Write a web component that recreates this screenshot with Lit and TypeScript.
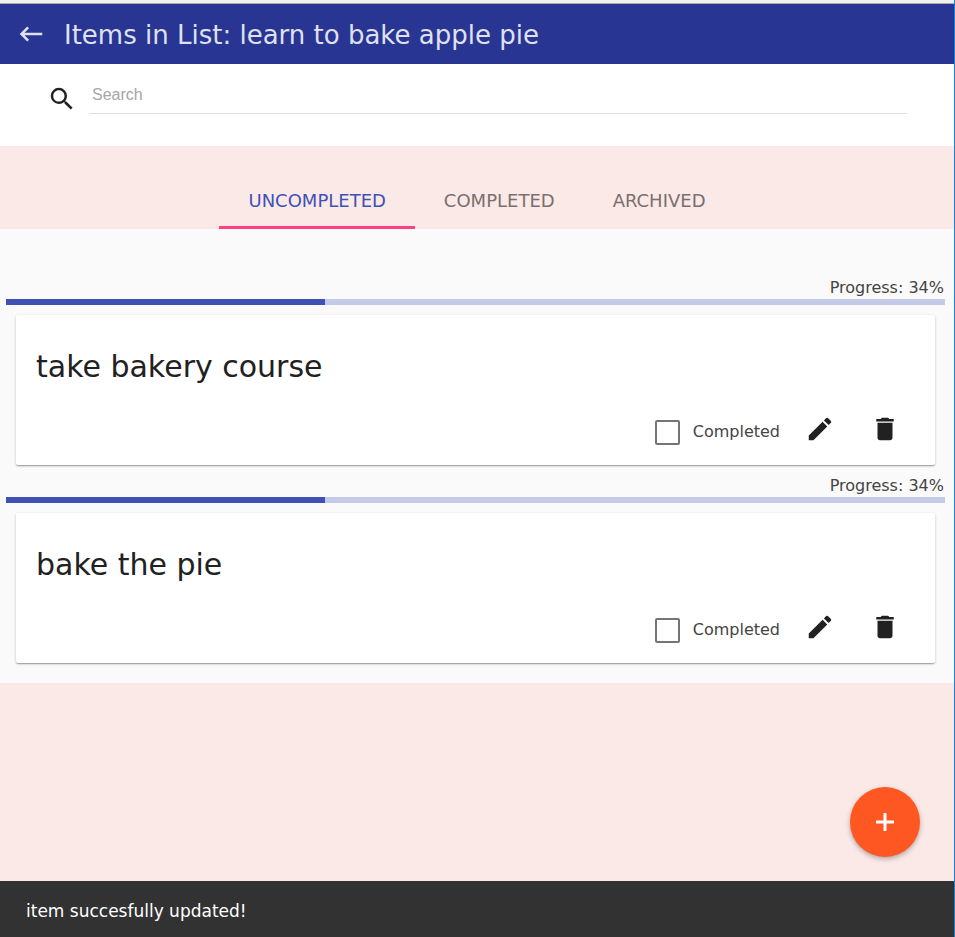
import { LitElement, html, css } from "lit";
import { customElement, property, state } from "lit/decorators.js";
import { classMap } from "lit/directives/class-map.js";

interface Item {
  id: number;
  title: string;
  progress: number;
}

@customElement("list-item")
class ListItem extends LitElement {
  @property({ attribute: false }) item!: Item;

  static styles = css`
    :host {
      display: block;
      padding-bottom: 10px;
    }
    .progress-label {
      display: block;
      height: 22px;
      padding-right: 1px;
      line-height: 22px;
      font-size: 16px;
      text-align: right;
      color: #444;
    }
    .bar {
      display: block;
      width: 100%;
      height: 6px;
      border: 0;
      appearance: none;
      background: #c5cae9;
    }
    .bar::-webkit-progress-bar {
      background: #c5cae9;
    }
    .bar::-webkit-progress-value {
      background: #3f51b5;
    }
    .card {
      display: flex;
      flex-direction: column;
      justify-content: space-between;
      box-sizing: border-box;
      min-height: 150px;
      margin: 10px 10px 0;
      padding: 30px 35px 20px 20px;
      border-radius: 2px;
      background: #fff;
      box-shadow: 0 1px 3px 0 rgba(0, 0, 0, 0.2), 0 1px 1px 0 rgba(0, 0, 0, 0.14),
        0 2px 1px -1px rgba(0, 0, 0, 0.12);
    }
    .title {
      margin: 0;
      font-size: 30px;
      font-weight: 400;
      line-height: 44px;
      color: #212121;
    }
    .actions {
      display: flex;
      align-items: flex-start;
      justify-content: flex-end;
      gap: 25px;
    }
    .check {
      display: flex;
      align-items: center;
      gap: 13px;
      padding-top: 5px;
      font-size: 16px;
      line-height: 26px;
      color: #444;
    }
    .box {
      box-sizing: border-box;
      width: 25px;
      height: 25px;
      margin: 0;
      border: 2px solid #757575;
      border-radius: 2px;
      appearance: none;
      background: #fff;
    }
    .box:checked {
      border-color: #3f51b5;
      background: #3f51b5;
    }
    .icon-button {
      display: flex;
      padding: 0;
      border: 0;
      background: none;
      cursor: pointer;
    }
    .icon-button + .icon-button {
      margin-left: 10px;
    }
    .icon {
      width: 30px;
      height: 30px;
      fill: #212121;
    }
  `;

  render() {
    const { id, title, progress } = this.item;
    return html`
      <label class="progress-label" for="bar-${id}">Progress: ${progress}%</label>
      <progress class="bar" id="bar-${id}" max="100" .value=${progress}></progress>
      <article class="card">
        <h2 class="title">${title}</h2>
        <div class="actions">
          <label class="check"><input class="box" type="checkbox" />Completed</label>
          <button class="icon-button" aria-label="Edit">
            <svg class="icon" viewBox="0 0 24 24">
              <path d="M3 17.25V21h3.75L17.81 9.94l-3.75-3.75L3 17.25zM20.71 7.04a1 1 0 0 0 0-1.41l-2.34-2.34a1 1 0 0 0-1.41 0l-1.83 1.83 3.75 3.75 1.83-1.83z" />
            </svg>
          </button>
          <button class="icon-button" aria-label="Delete">
            <svg class="icon" viewBox="0 0 24 24">
              <path d="M6 19c0 1.1.9 2 2 2h8c1.1 0 2-.9 2-2V7H6v12zM19 4h-3.5l-1-1h-5l-1 1H5v2h14V4z" />
            </svg>
          </button>
        </div>
      </article>
    `;
  }
}

@customElement("app-root")
class AppRoot extends LitElement {
  @state() private tab = "Uncompleted";

  private tabs = ["Uncompleted", "Completed", "Archived"];

  private items: Item[] = [
    { id: 1, title: "take bakery course", progress: 34 },
    { id: 2, title: "bake the pie", progress: 34 },
  ];

  static styles = css`
    :host {
      display: flex;
      flex-direction: column;
      box-sizing: border-box;
      min-height: 100vh;
      border-right: 1px solid #1a82d2;
      background: #fbe9e7;
      font-family: "DejaVu Sans", Verdana, sans-serif;
    }
    .edge {
      height: 3px;
      border-bottom: 1px solid #aaa;
      background: #f0f0f0;
    }
    .toolbar {
      display: flex;
      align-items: center;
      gap: 18px;
      height: 60px;
      padding: 0 16px;
      background: #283593;
    }
    .back {
      display: flex;
      padding: 0;
      border: 0;
      background: none;
      cursor: pointer;
    }
    .back-icon {
      width: 30px;
      height: 30px;
      fill: #dfe1ef;
    }
    .heading {
      margin: 0;
      padding-top: 2px;
      font-size: 26px;
      font-weight: 400;
      line-height: 32px;
      color: #dfe1ef;
    }
    .search {
      display: flex;
      align-items: flex-start;
      gap: 12px;
      box-sizing: border-box;
      height: 82px;
      padding: 12px 47px 0;
      background: #fff;
    }
    .search-icon {
      flex: none;
      width: 30px;
      height: 30px;
      margin-top: 8px;
      fill: #212121;
    }
    .search-input {
      flex: 1;
      min-width: 0;
      box-sizing: border-box;
      height: 38px;
      padding: 0 3px;
      border: 0;
      border-bottom: 1px solid #e0e0e0;
      outline: 0;
      background: none;
      font: 16px "Liberation Sans", Arial, sans-serif;
      color: #212121;
    }
    .search-input::placeholder {
      color: #a6a6a6;
    }
    .tabs {
      display: flex;
      justify-content: center;
      height: 60px;
      padding-top: 23px;
    }
    .tab {
      padding: 2px 29px 0;
      border: 0;
      border-top: 3px solid transparent;
      border-bottom: 3px solid transparent;
      background: none;
      font: inherit;
      font-size: 18px;
      text-transform: uppercase;
      color: #7a6f6e;
      cursor: pointer;
    }
    .tab.active {
      border-bottom-color: #ff4081;
      color: #3f51b5;
    }
    .list {
      padding: 48px 9px 10px 6px;
      background: #fafafa;
    }
    .footer {
      position: sticky;
      bottom: 0;
      margin-top: auto;
    }
    .add {
      position: absolute;
      right: 34px;
      bottom: 80px;
      display: flex;
      align-items: center;
      justify-content: center;
      width: 70px;
      height: 70px;
      padding: 0;
      border: 0;
      border-radius: 50%;
      background: #ff5722;
      box-shadow: 0 2px 5px 0 rgba(0, 0, 0, 0.3);
      cursor: pointer;
    }
    .add-icon {
      width: 30px;
      height: 30px;
      fill: none;
      stroke: #fff;
      stroke-width: 3;
    }
    .toast {
      padding: 18px 26px 14px;
      background: #323232;
      font-size: 17px;
      line-height: 24px;
      color: #fff;
    }
  `;

  render() {
    return html`
      <div class="edge"></div>
      <header class="toolbar">
        <button class="back" aria-label="Back">
          <svg class="back-icon" viewBox="0 0 24 24">
            <path d="M21 11H6.83l3.58-3.59L9 6l-6 6 6 6 1.41-1.41L6.83 13H21z" />
          </svg>
        </button>
        <h1 class="heading">Items in List: learn to bake apple pie</h1>
      </header>
      <div class="search">
        <svg class="search-icon" viewBox="0 0 24 24">
          <path d="M15.5 14h-.79l-.28-.27A6.47 6.47 0 0 0 16 9.5 6.5 6.5 0 1 0 9.5 16c1.61 0 3.09-.59 4.23-1.57l.27.28v.79l5 4.99L20.49 19l-4.99-5zm-6 0C7.01 14 5 11.99 5 9.5S7.01 5 9.5 5 14 7.01 14 9.5 11.99 14 9.5 14z" />
        </svg>
        <input class="search-input" type="search" placeholder="Search" aria-label="Search" />
      </div>
      <nav class="tabs" role="tablist">
        ${this.tabs.map(
          (name) => html`
            <button
              class=${classMap({ tab: true, active: name === this.tab })}
              role="tab"
              aria-selected=${name === this.tab}
              @click=${() => (this.tab = name)}
            >
              ${name}
            </button>
          `,
        )}
      </nav>
      <main class="list">
        ${this.items.map((item) => html`<list-item .item=${item}></list-item>`)}
      </main>
      <div class="footer">
        <button class="add" aria-label="Add item">
          <svg class="add-icon" viewBox="0 0 30 30">
            <path d="M15 6V24M6 15H24" />
          </svg>
        </button>
        <div class="toast" role="status">item succesfully updated!</div>
      </div>
    `;
  }
}
